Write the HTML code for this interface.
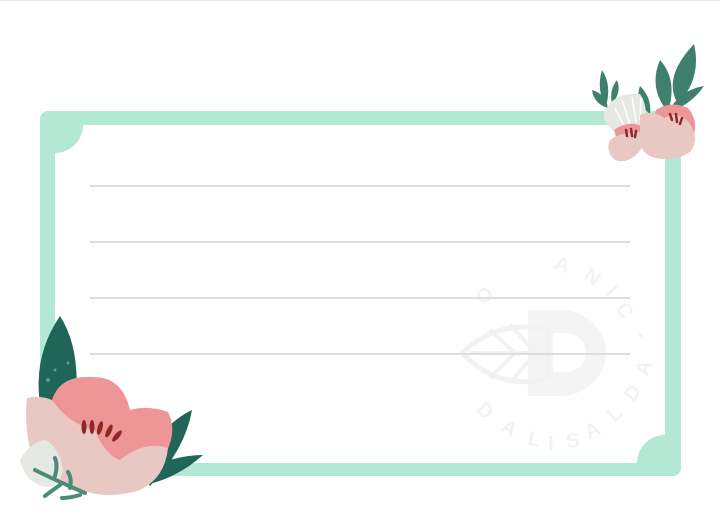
<!DOCTYPE html>
<html><head><meta charset="utf-8"><style>
html,body{margin:0;padding:0;background:#fff;}
body{width:720px;height:527px;position:relative;overflow:hidden;font-family:"Liberation Sans",sans-serif;}
svg{position:absolute;left:0;top:0;}
</style></head><body>
<svg width="720" height="527" viewBox="0 0 720 527">
<line x1="0" y1="0.5" x2="720" y2="0.5" stroke="#e6e6e6" stroke-width="1"/>
<!-- frame -->
<rect x="40" y="111" width="641" height="365" rx="8" fill="#b2e8d4"/>
<rect x="55" y="125" width="610" height="338" fill="#fff"/>
<path d="M55 125 H83 A28 28 0 0 1 55 153 Z" fill="#b2e8d4"/>
<path d="M665 463 H637 A28 28 0 0 1 665 435 Z" fill="#b2e8d4"/>
<!-- watermark -->
<g fill="#f3f4f3">
<path d="M528 310 H560 A46 43 0 0 1 560 396 H528 Z M553 333 V372 H566 A20 19.5 0 0 0 566 333 Z" fill-rule="evenodd"/>
<path d="M462 353 Q500 318 548 330 L548 378 Q500 392 462 353 Z" fill="none" stroke="#f1f3f1" stroke-width="5"/>
<path d="M470 353 H545 M490 330 L515 353 L490 378 M510 324 L535 353 L510 383" fill="none" stroke="#f1f3f1" stroke-width="4"/>
</g>
<g fill="#f1f3f1" font-size="20" font-weight="bold" font-family="Liberation Sans,sans-serif">
<text x="478" y="300" transform="rotate(-40 488 296)">O</text>
<text x="555" y="272" transform="rotate(20 565 265)">A</text>
<text x="585" y="285" transform="rotate(35 595 278)">N</text>
<text x="607" y="302" transform="rotate(50 615 295)">I</text>
<text x="618" y="317" transform="rotate(60 625 310)">C</text>
<circle cx="641" cy="335" r="2"/>
<text x="636" y="375" transform="rotate(-70 643 368)">A</text>
<text x="625" y="400" transform="rotate(-55 632 393)">D</text>
<text x="608" y="420" transform="rotate(-40 615 413)">L</text>
<text x="585" y="437" transform="rotate(-25 592 430)">A</text>
<text x="566" y="447" transform="rotate(-10 573 440)">S</text>
<text x="548" y="450">I</text>
<text x="528" y="446" transform="rotate(15 535 440)">L</text>
<text x="502" y="435" transform="rotate(30 510 428)">A</text>
<text x="478" y="418" transform="rotate(45 486 411)">D</text>
</g>
<!-- lines -->
<g stroke="#dedede" stroke-width="2">
<line x1="90" y1="186" x2="630" y2="186"/>
<line x1="90" y1="242" x2="630" y2="242"/>
<line x1="90" y1="298" x2="630" y2="298"/>
<line x1="90" y1="354" x2="630" y2="354"/>
</g>
<!-- bottom-left flower -->
<path d="M60 316 Q82 350 75 410 L42 415 Q30 360 60 316 Z" fill="#1f6558"/>
<path d="M192 410 Q185 450 150 486 L140 470 Q160 425 192 410 Z" fill="#1f6558"/>
<path d="M203 455 Q175 480 140 486 L145 470 Q175 455 203 455 Z" fill="#1f6558"/>
<g fill="#5c9a8c"><circle cx="48" cy="380" r="2"/><circle cx="55" cy="370" r="1.5"/><circle cx="68" cy="363" r="1.5"/><circle cx="46" cy="400" r="1.5"/></g>
<path d="M52 400 Q60 375 92 377 Q122 376 130 410 Q148 405 168 412 Q178 430 165 455 L100 470 L60 440 Z" fill="#ee9598"/>
<path d="M27 398 Q40 395 52 400 Q70 425 95 430 Q105 455 120 460 Q145 440 168 448 Q165 478 140 490 Q110 500 80 490 Q45 480 30 450 Q24 420 27 398 Z" fill="#e9c7c2"/>
<g fill="#8e2a26"><ellipse cx="84" cy="427" rx="2.5" ry="7"/><ellipse cx="92" cy="427" rx="2.5" ry="7"/><ellipse cx="100" cy="428" rx="2.5" ry="7" transform="rotate(15 100 428)"/><ellipse cx="109" cy="431" rx="2.5" ry="7" transform="rotate(25 109 431)"/><ellipse cx="117" cy="436" rx="2.5" ry="7" transform="rotate(40 117 436)"/></g>
<path d="M20 460 Q30 442 45 440 Q58 445 63 470 Q60 488 45 487 Q25 482 20 460 Z" fill="#e6e8e3"/>
<path d="M35 470 Q55 480 85 493 M55 476 Q58 465 55 458 M70 488 Q72 478 68 472 M60 485 Q50 492 45 496 M80 495 Q70 498 62 498" stroke="#4f8a78" stroke-width="4" fill="none" stroke-linecap="round"/>
<!-- top-right flowers -->
<path d="M602 70 Q612 85 606 106 Q596 90 602 70 Z M592 90 Q606 94 608 108 Q594 104 592 90 Z M617 80 Q622 92 612 104 Q609 90 617 80 Z" fill="#3f7f6d"/>
<path d="M694 44 Q702 78 678 104 Q662 78 694 44 Z M660 60 Q678 80 668 112 Q648 88 660 60 Z M704 86 Q690 106 668 112 Q680 90 704 86 Z M640 86 Q652 98 650 114 Q634 102 640 86 Z" fill="#3f7f6d"/>
<path d="M605 110 Q615 92 640 94 Q648 105 645 125 L615 132 Q600 122 605 110 Z" fill="#e6e8e3"/>
<path d="M615 108 L625 128 M622 100 L630 125 M632 97 L636 122 M641 98 L640 120" stroke="#fff" stroke-width="1.5"/>
<path d="M656 110 Q670 100 688 108 Q698 120 694 135 L650 130 Z" fill="#ee9598"/>
<path d="M614 130 Q628 120 642 126 L645 145 L620 150 Z" fill="#ee9598"/>
<path d="M640 115 Q655 110 664 118 Q680 110 690 124 Q700 140 690 152 Q675 162 655 158 Q645 155 642 148 Q630 165 615 160 Q605 152 610 140 Q620 132 640 132 Z" fill="#e9c7c2"/>
<g stroke="#8e2a26" stroke-width="2.5" stroke-linecap="round"><line x1="670" y1="114" x2="672" y2="120"/><line x1="676" y1="114" x2="677" y2="122"/><line x1="682" y1="118" x2="680" y2="124"/><line x1="626" y1="130" x2="627" y2="136"/><line x1="631" y1="129" x2="632" y2="136"/><line x1="636" y1="131" x2="635" y2="137"/></g>
</svg>
</body></html>
